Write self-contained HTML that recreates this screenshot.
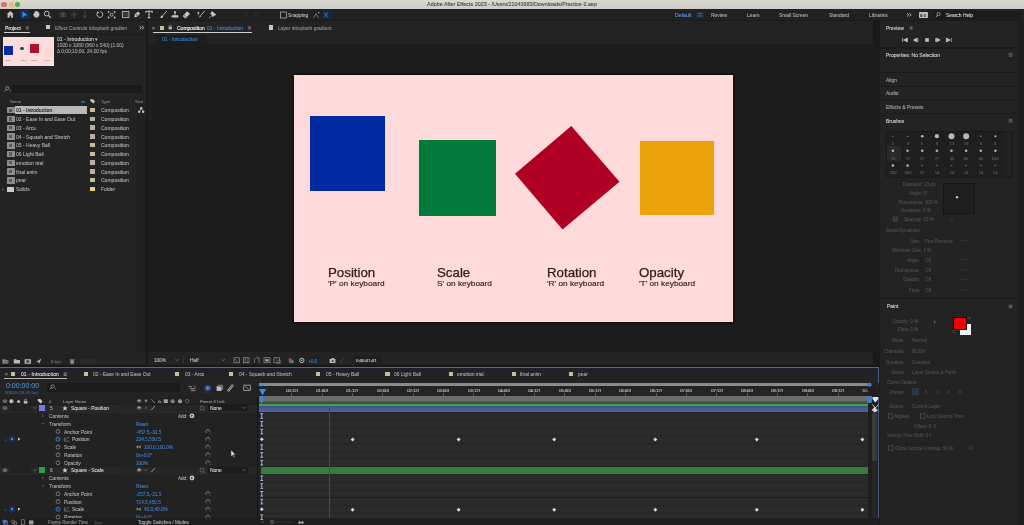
<!DOCTYPE html>
<html><head><meta charset="utf-8"><style>
html,body{margin:0;padding:0;width:1024px;height:525px;overflow:hidden;background:#1a1a1a;font-family:"Liberation Sans",sans-serif;}
body>div,#r>div{position:absolute;}
.t{position:absolute;white-space:nowrap;line-height:1;will-change:transform;-webkit-text-stroke:0.12px currentColor;}
svg{position:absolute;left:0;top:0;}
</style></head><body>
<div style="left:0px;top:0px;width:1024px;height:9px;background:linear-gradient(#dcdacb,#d3d1cb 50%,#cfcdca);"></div>
<div style="left:0px;top:9px;width:1024px;height:11px;background:#212121;"></div>
<div style="left:0px;top:20px;width:1024px;height:1px;background:#1b1b1b;"></div>
<div style="left:0px;top:21px;width:146px;height:344px;background:#232323;"></div>
<div style="left:148px;top:21px;width:725px;height:23px;background:#232323;"></div>
<div style="left:148px;top:44px;width:725px;height:308px;background:#1c1c1c;"></div>
<div style="left:148px;top:352px;width:725px;height:13px;background:#232323;"></div>
<div style="left:880px;top:21px;width:137px;height:504px;background:#232323;"></div>
<div style="left:1.4px;top:1.6px;width:5.2px;height:5.2px;border-radius:50%;background:#dc7262"></div>
<div style="left:8.700000000000001px;top:1.6px;width:5.2px;height:5.2px;border-radius:50%;background:#eab866"></div>
<div style="left:15.000000000000002px;top:1.6px;width:5.2px;height:5.2px;border-radius:50%;background:#55a855"></div>
<div class="t" style="left:511.5px;top:2px;font-size:5.4px;color:#4a4a48;transform:translateX(-50%);">Adobe After Effects 2023 - /Users/21043683/Downloads/Practice-2.aep</div>
<div style="left:20.2px;top:9.6px;width:8.5px;height:9.5px;background:#14305a;border-radius:1px"></div>
<div style="left:322.6px;top:10px;width:9.4px;height:9.6px;background:#14263e;border-radius:1px"></div>
<div class="t" style="left:288.3px;top:14px;font-size:4.75px;color:#b8b8b8;">Snapping</div>
<div class="t" style="left:674.8px;top:13px;font-size:5.2px;color:#5a92d8;">Default</div>
<div style="left:696px;top:12px;width:7.5px;height:6px;background:rgba(60,100,160,0.18);border-radius:1px"></div>
<div class="t" style="left:711px;top:14px;font-size:4.9px;color:#a8a8a8;">Review</div>
<div class="t" style="left:747px;top:14px;font-size:4.9px;color:#a8a8a8;">Learn</div>
<div class="t" style="left:779px;top:14px;font-size:4.9px;color:#a8a8a8;">Small Screen</div>
<div class="t" style="left:828.5px;top:14px;font-size:4.9px;color:#a8a8a8;">Standard</div>
<div class="t" style="left:868.7px;top:14px;font-size:4.9px;color:#a8a8a8;">Libraries</div>
<div style="left:918.7px;top:11.6px;width:9px;height:6.6px;background:#bdbdbd;border-radius:0.8px"></div>
<div class="t" style="left:919.6px;top:14px;font-size:4.2px;color:#303030;font-weight:bold">0:1</div>
<div style="left:933px;top:11px;width:88px;height:9px;background:#1b1b1b;"></div>
<div class="t" style="left:946px;top:14px;font-size:4.92px;color:#d0d0d0;-webkit-text-stroke:0.12px #d0d0d0">Search Help</div>
<div class="t" style="left:4.8px;top:27px;font-size:4.9px;color:#d6d6d6;font-weight:bold;letter-spacing:-0.1px">Project</div>
<div style="left:4px;top:32px;width:25.7px;height:1.1px;background:#d0d0d0;"></div>
<div style="left:45.8px;top:25.1px;width:4.7px;height:4.4px;background:#c4c2d6;"></div>
<div class="t" style="left:55px;top:27px;font-size:4.95px;color:#8c8c8c;">Effect Controls inksplash gradien</div>
<div style="left:0px;top:34px;width:146px;height:1px;background:#1c1c1c;"></div>
<div style="left:3px;top:37px;width:51px;height:29px;background:#fcdcdc;"></div>
<div style="left:4px;top:46px;width:9px;height:9px;background:#0a2aa0;"></div>
<div style="left:20.2px;top:47px;width:3.4px;height:3.4px;background:#1a5a32;border-radius:50%"></div>
<div style="left:30px;top:44px;width:9px;height:9px;background:#b0102a;"></div>
<div style="left:43.5px;top:46.5px;width:8px;height:8px;background:#f8d8c8;"></div>
<div style="left:5px;top:59.6px;width:6px;height:1px;background:rgba(120,90,90,0.3);"></div>
<div style="left:20.5px;top:59.6px;width:6px;height:1px;background:rgba(120,90,90,0.3);"></div>
<div style="left:31px;top:59.6px;width:6px;height:1px;background:rgba(120,90,90,0.3);"></div>
<div style="left:44px;top:59.6px;width:6px;height:1px;background:rgba(120,90,90,0.3);"></div>
<div class="t" style="left:57px;top:37px;font-size:5.1px;color:#c8c8c8;">01 - Introduction &#9662;</div>
<div class="t" style="left:57px;top:44px;font-size:4.85px;color:#a0a0a0;">1920 x 1080  (960 x 540) (1.00)</div>
<div class="t" style="left:57px;top:50px;font-size:4.85px;color:#a0a0a0;">&#916; 0;00;10;00, 24.00 fps</div>
<div style="left:12px;top:85px;width:130px;height:8.4px;background:#1a1a1a;border-radius:1px"></div>
<div class="t" style="left:10px;top:100px;font-size:4.2px;color:#7a7a7a;">Name</div>
<div class="t" style="left:100.5px;top:100px;font-size:4.2px;color:#7a7a7a;">Type</div>
<div class="t" style="left:135px;top:100px;font-size:4.2px;color:#7a7a7a;">Size</div>
<div style="left:130px;top:98px;width:0.6px;height:6px;background:#2e2e2e;"></div>
<div style="left:98px;top:98px;width:0.6px;height:6px;background:#2e2e2e;"></div>
<div style="left:15px;top:105.89999999999999px;width:72px;height:8.4px;background:#b8b8b8;"></div>
<div style="left:7px;top:107.1px;width:7.6px;height:6.4px;background:#8e8e8e;border-radius:0.6px"></div>
<div style="left:8.6px;top:108.5px;width:3.8px;height:3.4px;background:#5a5a5a;"></div>
<div style="left:90.2px;top:107.89999999999999px;width:4.4px;height:4.4px;background:#c8bc94;"></div>
<div class="t" style="left:100.5px;top:108px;font-size:5.02px;color:#a8a8a8;">Composition</div>
<div class="t" style="left:16px;top:108px;font-size:5.02px;color:#1e1e1e;">01 - Introduction</div>
<div style="left:7px;top:115.86px;width:7.6px;height:6.4px;background:#8e8e8e;border-radius:0.6px"></div>
<div style="left:8.6px;top:117.26px;width:3.8px;height:3.4px;background:#5a5a5a;"></div>
<div style="left:90.2px;top:116.66px;width:4.4px;height:4.4px;background:#b8b0a0;"></div>
<div class="t" style="left:100.5px;top:117px;font-size:5.02px;color:#a8a8a8;">Composition</div>
<div class="t" style="left:16px;top:117px;font-size:5.02px;color:#a8a8a8;">02 - Ease In and Ease Out</div>
<div style="left:7px;top:124.61999999999999px;width:7.6px;height:6.4px;background:#8e8e8e;border-radius:0.6px"></div>
<div style="left:8.6px;top:126.02px;width:3.8px;height:3.4px;background:#5a5a5a;"></div>
<div style="left:90.2px;top:125.41999999999999px;width:4.4px;height:4.4px;background:#b8b0a0;"></div>
<div class="t" style="left:100.5px;top:126px;font-size:5.02px;color:#a8a8a8;">Composition</div>
<div class="t" style="left:16px;top:126px;font-size:5.02px;color:#a8a8a8;">03 - Arcs</div>
<div style="left:7px;top:133.38px;width:7.6px;height:6.4px;background:#8e8e8e;border-radius:0.6px"></div>
<div style="left:8.6px;top:134.78px;width:3.8px;height:3.4px;background:#5a5a5a;"></div>
<div style="left:90.2px;top:134.18px;width:4.4px;height:4.4px;background:#b8b0a0;"></div>
<div class="t" style="left:100.5px;top:135px;font-size:5.02px;color:#a8a8a8;">Composition</div>
<div class="t" style="left:16px;top:135px;font-size:5.02px;color:#a8a8a8;">04 - Squash and Stretch</div>
<div style="left:7px;top:142.14px;width:7.6px;height:6.4px;background:#8e8e8e;border-radius:0.6px"></div>
<div style="left:8.6px;top:143.54px;width:3.8px;height:3.4px;background:#5a5a5a;"></div>
<div style="left:90.2px;top:142.94px;width:4.4px;height:4.4px;background:#c8bc94;"></div>
<div class="t" style="left:100.5px;top:143px;font-size:5.02px;color:#a8a8a8;">Composition</div>
<div class="t" style="left:16px;top:143px;font-size:5.02px;color:#a8a8a8;">05 - Heavy Ball</div>
<div style="left:7px;top:150.89999999999998px;width:7.6px;height:6.4px;background:#8e8e8e;border-radius:0.6px"></div>
<div style="left:8.6px;top:152.29999999999998px;width:3.8px;height:3.4px;background:#5a5a5a;"></div>
<div style="left:90.2px;top:151.7px;width:4.4px;height:4.4px;background:#c8bc94;"></div>
<div class="t" style="left:100.5px;top:152px;font-size:5.02px;color:#a8a8a8;">Composition</div>
<div class="t" style="left:16px;top:152px;font-size:5.02px;color:#a8a8a8;">06 Light Ball</div>
<div style="left:7px;top:159.66px;width:7.6px;height:6.4px;background:#8e8e8e;border-radius:0.6px"></div>
<div style="left:8.6px;top:161.06px;width:3.8px;height:3.4px;background:#5a5a5a;"></div>
<div style="left:90.2px;top:160.46px;width:4.4px;height:4.4px;background:#b8b0a0;"></div>
<div class="t" style="left:100.5px;top:161px;font-size:5.02px;color:#a8a8a8;">Composition</div>
<div class="t" style="left:16px;top:161px;font-size:5.02px;color:#a8a8a8;">emotion trial</div>
<div style="left:7px;top:168.42px;width:7.6px;height:6.4px;background:#8e8e8e;border-radius:0.6px"></div>
<div style="left:8.6px;top:169.82px;width:3.8px;height:3.4px;background:#5a5a5a;"></div>
<div style="left:90.2px;top:169.22px;width:4.4px;height:4.4px;background:#b8b0a0;"></div>
<div class="t" style="left:100.5px;top:170px;font-size:5.02px;color:#a8a8a8;">Composition</div>
<div class="t" style="left:16px;top:170px;font-size:5.02px;color:#a8a8a8;">final anim</div>
<div style="left:7px;top:177.18px;width:7.6px;height:6.4px;background:#8e8e8e;border-radius:0.6px"></div>
<div style="left:8.6px;top:178.58px;width:3.8px;height:3.4px;background:#5a5a5a;"></div>
<div style="left:90.2px;top:177.98000000000002px;width:4.4px;height:4.4px;background:#c8bc94;"></div>
<div class="t" style="left:100.5px;top:178px;font-size:5.02px;color:#a8a8a8;">Composition</div>
<div class="t" style="left:16px;top:178px;font-size:5.02px;color:#a8a8a8;">pear</div>
<div style="left:7.2px;top:186.54px;width:7px;height:5px;background:#c8c8c8;border-radius:0.5px"></div>
<div class="t" style="left:2.2px;top:188px;font-size:4.5px;color:#888;">&#8250;</div>
<div style="left:90.2px;top:186.74px;width:4.4px;height:4.4px;background:#e6d470;"></div>
<div class="t" style="left:100.5px;top:187px;font-size:5.0px;color:#a8a8a8;">Folder</div>
<div class="t" style="left:16px;top:187px;font-size:5.02px;color:#a8a8a8;">Solids</div>
<div style="left:137px;top:104px;width:9px;height:248px;background:#202020;"></div>
<div style="left:146px;top:21px;width:2px;height:344px;background:#181818;"></div>
<div style="left:148px;top:44px;width:3px;height:308px;background:#1f1f1f;"></div>
<div style="left:0px;top:352px;width:146px;height:13px;background:#232323;"></div>
<div class="t" style="left:51px;top:360px;font-size:4.3px;color:#707070;">8 bpc</div>
<div style="left:80px;top:359px;width:16px;height:5px;background:#2a2a2a;border-radius:1px"></div>
<div class="t" style="left:152.2px;top:26px;font-size:5px;color:#8a8a8a;">&#215;</div>
<div style="left:160px;top:25.6px;width:4.2px;height:4.2px;background:#c8bc94;"></div>
<div class="t" style="left:177px;top:26px;font-size:5.0px;color:#e0e0e0;-webkit-text-stroke:0.2px #e0e0e0">Composition</div>
<div class="t" style="left:207px;top:26px;font-size:5.0px;color:#3a86d8;">01 - Introduction</div>
<div style="left:152.8px;top:32px;width:99.2px;height:1.1px;background:#d0d0d0;"></div>
<div style="left:269px;top:25.4px;width:4.2px;height:4.4px;background:#c4c2d6;"></div>
<div class="t" style="left:277.8px;top:27px;font-size:4.95px;color:#8a8a8a;">Layer inksplash gradient</div>
<div style="left:155px;top:35px;width:52px;height:8.6px;background:#1d1d1d;"></div>
<div class="t" style="left:161.6px;top:38px;font-size:4.95px;color:#3a7cc8;">01 - Introduction</div>
<div class="t" style="left:157px;top:38px;font-size:4.5px;color:#444;">&#8249;</div>
<div style="left:148px;top:352px;width:725px;height:13px;background:#232323;"></div>
<div class="t" style="left:153.7px;top:359px;font-size:4.6px;color:#b8b8b8;">100%</div>
<div style="left:183px;top:356px;width:0.6px;height:8px;background:#333;"></div>
<div class="t" style="left:189.8px;top:359px;font-size:4.8px;color:#b8b8b8;">Half</div>
<div class="t" style="left:307.6px;top:360px;font-size:4.6px;color:#3a7cc8;">+0.0</div>
<div style="left:354px;top:356.2px;width:28px;height:8.4px;background:#1e1e1e;border-radius:1px"></div>
<div class="t" style="left:356px;top:359px;font-size:4.4px;color:#d0d0d0;">0;00;01;01</div>
<div style="left:879px;top:21px;width:1px;height:504px;background:#1a1a1a;"></div>
<div style="left:880px;top:21px;width:137px;height:26px;background:#232323;"></div>
<div style="left:880px;top:47px;width:137px;height:1.5px;background:#1a1a1a;"></div>
<div class="t" style="left:886.4px;top:26px;font-size:5.0px;color:#d0d0d0;">Preview</div>
<div style="left:880px;top:48.5px;width:137px;height:477px;background:#232323;"></div>
<div class="t" style="left:886.4px;top:53px;font-size:5.0px;color:#d0d0d0;">Properties: No Selection</div>
<div style="left:880px;top:71.9px;width:137px;height:1.2px;background:#1b1b1b;"></div>
<div style="left:880px;top:85.5px;width:137px;height:1.2px;background:#1b1b1b;"></div>
<div style="left:880px;top:99.1px;width:137px;height:1.2px;background:#1b1b1b;"></div>
<div style="left:880px;top:112.7px;width:137px;height:1.2px;background:#1b1b1b;"></div>
<div class="t" style="left:886.4px;top:79px;font-size:4.9px;color:#a0a0a0;">Align</div>
<div class="t" style="left:886.4px;top:92px;font-size:4.9px;color:#a0a0a0;">Audio</div>
<div class="t" style="left:886.4px;top:106px;font-size:4.9px;color:#a0a0a0;">Effects &amp; Presets</div>
<div class="t" style="left:886.4px;top:119px;font-size:5.0px;color:#d0d0d0;">Brushes</div>
<div style="left:1017px;top:21px;width:7px;height:504px;background:#1e1e1e;"></div>
<div style="left:886.4px;top:131.4px;width:124.6px;height:45px;background:#1f1f1f;border:0.5px solid #1a1a1a"></div>
<div style="left:1004px;top:132px;width:6.6px;height:44px;background:#222222;"></div>
<div style="left:886.6px;top:145.6px;width:14.6px;height:15px;background:#2a2a2a;"></div>
<div class="t" style="left:892.9px;top:142px;font-size:4.2px;color:#5a5a5a;transform:translateX(-50%);">1</div>
<div class="t" style="left:892.9px;top:157px;font-size:4.2px;color:#5a5a5a;transform:translateX(-50%);">13</div>
<div class="t" style="left:892.9px;top:171px;font-size:4.2px;color:#5a5a5a;transform:translateX(-50%);">200</div>
<div class="t" style="left:907.55px;top:142px;font-size:4.2px;color:#5a5a5a;transform:translateX(-50%);">3</div>
<div class="t" style="left:907.55px;top:157px;font-size:4.2px;color:#5a5a5a;transform:translateX(-50%);">17</div>
<div class="t" style="left:907.55px;top:171px;font-size:4.2px;color:#5a5a5a;transform:translateX(-50%);">300</div>
<div class="t" style="left:922.1999999999999px;top:142px;font-size:4.2px;color:#5a5a5a;transform:translateX(-50%);">5</div>
<div class="t" style="left:922.1999999999999px;top:157px;font-size:4.2px;color:#5a5a5a;transform:translateX(-50%);">21</div>
<div class="t" style="left:922.1999999999999px;top:171px;font-size:4.2px;color:#5a5a5a;transform:translateX(-50%);">11</div>
<div class="t" style="left:936.85px;top:142px;font-size:4.2px;color:#5a5a5a;transform:translateX(-50%);">9</div>
<div class="t" style="left:936.85px;top:157px;font-size:4.2px;color:#5a5a5a;transform:translateX(-50%);">27</div>
<div class="t" style="left:936.85px;top:171px;font-size:4.2px;color:#5a5a5a;transform:translateX(-50%);">14</div>
<div class="t" style="left:951.5px;top:142px;font-size:4.2px;color:#5a5a5a;transform:translateX(-50%);">13</div>
<div class="t" style="left:951.5px;top:157px;font-size:4.2px;color:#5a5a5a;transform:translateX(-50%);">35</div>
<div class="t" style="left:951.5px;top:171px;font-size:4.2px;color:#5a5a5a;transform:translateX(-50%);">14</div>
<div class="t" style="left:966.15px;top:142px;font-size:4.2px;color:#5a5a5a;transform:translateX(-50%);">19</div>
<div class="t" style="left:966.15px;top:157px;font-size:4.2px;color:#5a5a5a;transform:translateX(-50%);">45</div>
<div class="t" style="left:966.15px;top:171px;font-size:4.2px;color:#5a5a5a;transform:translateX(-50%);">14</div>
<div class="t" style="left:980.8px;top:142px;font-size:4.2px;color:#5a5a5a;transform:translateX(-50%);">5</div>
<div class="t" style="left:980.8px;top:157px;font-size:4.2px;color:#5a5a5a;transform:translateX(-50%);">65</div>
<div class="t" style="left:980.8px;top:171px;font-size:4.2px;color:#5a5a5a;transform:translateX(-50%);">14</div>
<div class="t" style="left:995.4499999999999px;top:142px;font-size:4.2px;color:#5a5a5a;transform:translateX(-50%);">9</div>
<div class="t" style="left:995.4499999999999px;top:157px;font-size:4.2px;color:#5a5a5a;transform:translateX(-50%);">100</div>
<div class="t" style="left:995.4499999999999px;top:171px;font-size:4.2px;color:#5a5a5a;transform:translateX(-50%);">14</div>
<div class="t" style="right:88.5px;top:183px;font-size:4.6px;color:#4c4c4c;">Diameter: 23 px</div>
<div class="t" style="right:96.5px;top:192px;font-size:4.6px;color:#4c4c4c;">Angle: 0&#176;</div>
<div class="t" style="right:86.5px;top:201px;font-size:4.6px;color:#4c4c4c;">Roundness: 100 %</div>
<div class="t" style="right:92.5px;top:209px;font-size:4.6px;color:#4c4c4c;">Hardness: 0 %</div>
<div class="t" style="right:90.5px;top:218px;font-size:4.6px;color:#4c4c4c;">Spacing: 25 %</div>
<div style="left:942.7px;top:183.2px;width:30px;height:29px;background:#1e1e1e;border:0.6px solid #141414"></div>
<div class="t" style="left:950px;top:219px;font-size:4.5px;color:#444;">&#9633;</div>
<div class="t" style="left:886.4px;top:229px;font-size:4.6px;color:#4c4c4c;">Brush Dynamics</div>
<div class="t" style="right:104px;top:240px;font-size:4.6px;color:#4c4c4c;">Size:</div>
<div class="t" style="left:925px;top:240px;font-size:4.6px;color:#4c4c4c;">Pen Pressure</div>
<div class="t" style="right:92.5px;top:249px;font-size:4.6px;color:#4c4c4c;">Minimum Size: 1 %</div>
<div class="t" style="right:104px;top:259px;font-size:4.6px;color:#4c4c4c;">Angle:</div>
<div class="t" style="left:925px;top:259px;font-size:4.6px;color:#4c4c4c;">Off</div>
<div class="t" style="right:104px;top:269px;font-size:4.6px;color:#4c4c4c;">Roundness:</div>
<div class="t" style="left:925px;top:269px;font-size:4.6px;color:#4c4c4c;">Off</div>
<div class="t" style="right:104px;top:278px;font-size:4.6px;color:#4c4c4c;">Opacity:</div>
<div class="t" style="left:925px;top:278px;font-size:4.6px;color:#4c4c4c;">Off</div>
<div class="t" style="right:104px;top:289px;font-size:4.6px;color:#4c4c4c;">Flow:</div>
<div class="t" style="left:925px;top:289px;font-size:4.6px;color:#4c4c4c;">Off</div>
<div style="left:880px;top:297.6px;width:137px;height:1.4px;background:#1b1b1b;"></div>
<div class="t" style="left:886.8px;top:304px;font-size:5.0px;color:#d0d0d0;">Paint</div>
<div class="t" style="right:105.5px;top:320px;font-size:4.6px;color:#4c4c4c;">Opacity: 0 %</div>
<div class="t" style="right:105.5px;top:328px;font-size:4.6px;color:#4c4c4c;">Flow: 0 %</div>
<div style="left:959.6px;top:324px;width:11.4px;height:10.7px;background:#f4f4f4;"></div>
<div style="left:953px;top:317px;width:12px;height:10.7px;background:#f00000;border:0.4px solid #300"></div>
<div class="t" style="right:119px;top:339px;font-size:4.6px;color:#4c4c4c;">Mode:</div>
<div class="t" style="left:912px;top:339px;font-size:4.6px;color:#4c4c4c;">Normal</div>
<div class="t" style="right:119px;top:350px;font-size:4.6px;color:#4c4c4c;">Channels:</div>
<div class="t" style="left:912px;top:350px;font-size:4.6px;color:#4c4c4c;">RGBA</div>
<div class="t" style="right:119px;top:361px;font-size:4.6px;color:#4c4c4c;">Duration:</div>
<div class="t" style="left:912px;top:361px;font-size:4.6px;color:#4c4c4c;">Constant</div>
<div class="t" style="right:119px;top:371px;font-size:4.6px;color:#4c4c4c;">Erase:</div>
<div class="t" style="left:912px;top:371px;font-size:4.6px;color:#4c4c4c;">Layer Source &amp; Paint</div>
<div class="t" style="left:886.8px;top:381px;font-size:4.6px;color:#4c4c4c;">Clone Options</div>
<div class="t" style="right:119px;top:391px;font-size:4.6px;color:#4c4c4c;">Preset:</div>
<div style="left:912.4px;top:388.4px;width:6.4px;height:7px;background:#2a3648;"></div>
<div class="t" style="right:119px;top:405px;font-size:4.6px;color:#4c4c4c;">Source:</div>
<div class="t" style="left:912px;top:405px;font-size:4.6px;color:#4c4c4c;">Current Layer</div>
<div class="t" style="left:894.4px;top:415px;font-size:4.6px;color:#4c4c4c;">Aligned</div>
<div class="t" style="left:926.8px;top:415px;font-size:4.6px;color:#4c4c4c;">Lock Source Time</div>
<div class="t" style="left:914px;top:425px;font-size:4.6px;color:#4c4c4c;">Offset: 0, 0</div>
<div class="t" style="left:886.8px;top:434px;font-size:4.6px;color:#4c4c4c;">Source Time Shift: 0 f</div>
<div class="t" style="left:894.6px;top:447px;font-size:4.6px;color:#4c4c4c;">Clone Source Overlay:  50 %</div>
<div style="left:0px;top:365px;width:880px;height:2px;background:#15171b;"></div>
<div style="left:0px;top:367px;width:879px;height:158px;background:#232323;"></div>
<div style="left:0px;top:368px;width:879px;height:8px;background:linear-gradient(#1d212a,#232323);"></div>
<div style="left:0px;top:367px;width:879px;height:1px;background:#56688a;"></div>
<div style="left:878px;top:367px;width:1px;height:158px;background:#4a5c80;"></div>
<div class="t" style="left:4.5px;top:373px;font-size:4.6px;color:#8a8a8a;">&#215;</div>
<div style="left:11px;top:372px;width:4.2px;height:4.4px;background:#c8bc94;"></div>
<div class="t" style="left:21px;top:373px;font-size:4.9px;color:#d8d8d8;-webkit-text-stroke:0.15px #d8d8d8;letter-spacing:0.15px">01 - Introduction</div>
<div style="left:4.4px;top:378.2px;width:63px;height:1.1px;background:#b4b4b4;"></div>
<div style="left:84px;top:372px;width:4.2px;height:4.4px;background:#c8bc94;"></div>
<div class="t" style="left:93px;top:373px;font-size:4.9px;color:#a4a4a4;">02 - Ease In and Ease Out</div>
<div style="left:175px;top:372px;width:4.2px;height:4.4px;background:#c8bc94;"></div>
<div class="t" style="left:185px;top:373px;font-size:4.9px;color:#a4a4a4;">03 - Arcs</div>
<div style="left:229px;top:372px;width:4.2px;height:4.4px;background:#c8bc94;"></div>
<div class="t" style="left:239px;top:373px;font-size:4.9px;color:#a4a4a4;">04 - Squash and Stretch</div>
<div style="left:316px;top:372px;width:4.2px;height:4.4px;background:#c8bc94;"></div>
<div class="t" style="left:326px;top:373px;font-size:4.9px;color:#a4a4a4;">05 - Heavy Ball</div>
<div style="left:385.4px;top:372px;width:4.2px;height:4.4px;background:#c8bc94;"></div>
<div class="t" style="left:394px;top:373px;font-size:4.9px;color:#a4a4a4;">06 Light Ball</div>
<div style="left:448.6px;top:372px;width:4.2px;height:4.4px;background:#c8bc94;"></div>
<div class="t" style="left:457px;top:373px;font-size:4.9px;color:#a4a4a4;">emotion trial</div>
<div style="left:512px;top:372px;width:4.2px;height:4.4px;background:#c8bc94;"></div>
<div class="t" style="left:520px;top:373px;font-size:4.9px;color:#a4a4a4;">final anim</div>
<div style="left:568.6px;top:372px;width:4.2px;height:4.4px;background:#c8bc94;"></div>
<div class="t" style="left:578px;top:373px;font-size:4.9px;color:#a4a4a4;">pear</div>
<div class="t" style="left:5.6px;top:383px;font-size:6.5px;color:#5c9ce4;transform-origin:0 50%;transform:scaleX(1.08);-webkit-text-stroke:0">0:00:00:00</div>
<div class="t" style="left:5.2px;top:392px;font-size:3.6px;color:#35608a;transform-origin:0 50%;transform:scaleX(1.2)">00000 (24.00 fps)</div>
<div style="left:47px;top:383px;width:133px;height:8.8px;background:#1a1a1a;border-radius:1px"></div>
<div style="left:203.4px;top:392.4px;width:8.6px;height:0.7px;background:#4a2020;"></div>
<div style="left:0px;top:396.6px;width:258px;height:121.4px;background:#222222;"></div>
<div class="t" style="left:48.6px;top:400px;font-size:4.0px;color:#7a7a7a;">#</div>
<div class="t" style="left:63px;top:400px;font-size:4.3px;color:#888888;">Layer Name</div>
<div class="t" style="left:157.6px;top:400px;font-size:4.4px;color:#a0a0a0;font-style:italic">fx</div>
<div class="t" style="left:200.4px;top:400px;font-size:4.1px;color:#909090;">Parent &amp; Link</div>
<div style="left:0px;top:404px;width:258px;height:0.8px;background:#1c1c1c;"></div>
<div style="left:0px;top:404.6px;width:257px;height:8px;background:#282828;"></div>
<div style="left:10px;top:405px;width:21px;height:6px;background:#222222;"></div>
<div style="left:39px;top:405.2px;width:5.6px;height:5.6px;background:#6e7ce0;"></div>
<div class="t" style="left:49.6px;top:407px;font-size:4.8px;color:#a8a8a8;">5</div>
<div class="t" style="left:71px;top:407px;font-size:4.95px;color:#d0d0d0;">Square - Position</div>
<div style="left:118px;top:404.4px;width:18px;height:7.2px;background:#262626;"></div>
<div style="left:157px;top:404.6px;width:42px;height:6.8px;background:#262626;"></div>
<div style="left:207.6px;top:404.6px;width:40px;height:6.8px;background:#1c1c1c;"></div>
<div class="t" style="left:210px;top:407px;font-size:4.9px;color:#d0d0d0;">None</div>
<div class="t" style="left:49px;top:415px;font-size:4.9px;color:#a8a8a8;">Contents</div>
<div class="t" style="left:178px;top:415px;font-size:4.6px;color:#a8a8a8;">Add:</div>
<div class="t" style="left:49px;top:423px;font-size:4.9px;color:#a8a8a8;">Transform</div>
<div class="t" style="left:136px;top:423px;font-size:4.7px;color:#3a7cc8;">Reset</div>
<div class="t" style="left:64px;top:431px;font-size:4.9px;color:#a8a8a8;">Anchor Point</div>
<div class="t" style="left:136px;top:431px;font-size:4.7px;color:#3a7cc8;">-457.5,-31.5</div>
<div class="t" style="left:3.6px;top:439px;font-size:3.4px;color:#444;">&#9664;</div>
<div class="t" style="left:72px;top:438px;font-size:4.9px;color:#a8a8a8;">Position</div>
<div class="t" style="left:136px;top:438px;font-size:4.7px;color:#3a7cc8;">234.5,530.5</div>
<div class="t" style="left:64px;top:446px;font-size:4.9px;color:#a8a8a8;">Scale</div>
<div class="t" style="left:144px;top:446px;font-size:4.7px;color:#3a7cc8;">100.0,100.0%</div>
<div class="t" style="left:64px;top:454px;font-size:4.9px;color:#a8a8a8;">Rotation</div>
<div class="t" style="left:136px;top:454px;font-size:4.7px;color:#3a7cc8;">0x+0.0&#176;</div>
<div class="t" style="left:64px;top:462px;font-size:4.9px;color:#a8a8a8;">Opacity</div>
<div class="t" style="left:136px;top:462px;font-size:4.7px;color:#3a7cc8;">100%</div>
<div style="left:0px;top:466.8px;width:257px;height:8px;background:#282828;"></div>
<div style="left:10px;top:467.2px;width:21px;height:6px;background:#222222;"></div>
<div style="left:39px;top:467.4px;width:5.6px;height:5.6px;background:#30a040;"></div>
<div class="t" style="left:49.6px;top:469px;font-size:4.8px;color:#a8a8a8;">6</div>
<div class="t" style="left:71px;top:469px;font-size:4.95px;color:#d0d0d0;">Square - Scale</div>
<div style="left:118px;top:466.59999999999997px;width:18px;height:7.2px;background:#262626;"></div>
<div style="left:157px;top:466.8px;width:42px;height:6.8px;background:#262626;"></div>
<div style="left:207.6px;top:466.8px;width:40px;height:6.8px;background:#1c1c1c;"></div>
<div class="t" style="left:210px;top:469px;font-size:4.9px;color:#d0d0d0;">None</div>
<div class="t" style="left:49px;top:477px;font-size:4.9px;color:#a8a8a8;">Contents</div>
<div class="t" style="left:178px;top:477px;font-size:4.6px;color:#a8a8a8;">Add:</div>
<div class="t" style="left:49px;top:485px;font-size:4.9px;color:#a8a8a8;">Transform</div>
<div class="t" style="left:136px;top:485px;font-size:4.7px;color:#3a7cc8;">Reset</div>
<div class="t" style="left:64px;top:493px;font-size:4.9px;color:#a8a8a8;">Anchor Point</div>
<div class="t" style="left:136px;top:493px;font-size:4.7px;color:#3a7cc8;">-257.5,-21.5</div>
<div class="t" style="left:64px;top:501px;font-size:4.9px;color:#a8a8a8;">Position</div>
<div class="t" style="left:136px;top:501px;font-size:4.7px;color:#3a7cc8;">714.5,450.5</div>
<div class="t" style="left:3.6px;top:509px;font-size:3.4px;color:#444;">&#9664;</div>
<div class="t" style="left:72px;top:508px;font-size:4.9px;color:#a8a8a8;">Scale</div>
<div class="t" style="left:144px;top:508px;font-size:4.7px;color:#3a7cc8;">40.0,40.0%</div>
<div class="t" style="left:64px;top:516px;font-size:4.9px;color:#a8a8a8;">Rotation</div>
<div class="t" style="left:136px;top:516px;font-size:4.7px;color:#3a7cc8;">0x+0.0&#176;</div>
<div style="left:0px;top:518px;width:879px;height:7px;background:#1e1e1e;"></div>
<div class="t" style="left:48px;top:521px;font-size:4.5px;color:#8a8a8a;">Frame Render Time</div>
<div class="t" style="left:94px;top:521px;font-size:4.1px;color:#5a5a5a;">1ms</div>
<div class="t" style="left:138px;top:521px;font-size:4.6px;color:#a8a8a8;">Toggle Switches / Modes</div>
<div style="left:258.6px;top:383.2px;width:620px;height:13.4px;background:#232323;"></div>
<div style="left:258.6px;top:383.2px;width:609px;height:3px;background:#8a8a8a;border-radius:1px"></div>
<div class="t" style="left:291.6px;top:389px;font-size:4.2px;color:#c4c4c4;transform:translateX(-50%);">00:12f</div>
<div style="left:291.3px;top:393.4px;width:0.7px;height:2.4px;background:#5c5c5c;"></div>
<div class="t" style="left:321.95000000000005px;top:389px;font-size:4.2px;color:#c4c4c4;transform:translateX(-50%);">01:00f</div>
<div style="left:321.65000000000003px;top:393.4px;width:0.7px;height:2.4px;background:#5c5c5c;"></div>
<div class="t" style="left:352.3px;top:389px;font-size:4.2px;color:#c4c4c4;transform:translateX(-50%);">01:12f</div>
<div style="left:352.0px;top:393.4px;width:0.7px;height:2.4px;background:#5c5c5c;"></div>
<div class="t" style="left:382.65000000000003px;top:389px;font-size:4.2px;color:#c4c4c4;transform:translateX(-50%);">02:00f</div>
<div style="left:382.35px;top:393.4px;width:0.7px;height:2.4px;background:#5c5c5c;"></div>
<div class="t" style="left:413.0px;top:389px;font-size:4.2px;color:#c4c4c4;transform:translateX(-50%);">02:12f</div>
<div style="left:412.7px;top:393.4px;width:0.7px;height:2.4px;background:#5c5c5c;"></div>
<div class="t" style="left:443.35px;top:389px;font-size:4.2px;color:#c4c4c4;transform:translateX(-50%);">03:00f</div>
<div style="left:443.05px;top:393.4px;width:0.7px;height:2.4px;background:#5c5c5c;"></div>
<div class="t" style="left:473.70000000000005px;top:389px;font-size:4.2px;color:#c4c4c4;transform:translateX(-50%);">03:12f</div>
<div style="left:473.40000000000003px;top:393.4px;width:0.7px;height:2.4px;background:#5c5c5c;"></div>
<div class="t" style="left:504.05000000000007px;top:389px;font-size:4.2px;color:#c4c4c4;transform:translateX(-50%);">04:00f</div>
<div style="left:503.75000000000006px;top:393.4px;width:0.7px;height:2.4px;background:#5c5c5c;"></div>
<div class="t" style="left:534.4000000000001px;top:389px;font-size:4.2px;color:#c4c4c4;transform:translateX(-50%);">04:12f</div>
<div style="left:534.1000000000001px;top:393.4px;width:0.7px;height:2.4px;background:#5c5c5c;"></div>
<div class="t" style="left:564.75px;top:389px;font-size:4.2px;color:#c4c4c4;transform:translateX(-50%);">05:00f</div>
<div style="left:564.45px;top:393.4px;width:0.7px;height:2.4px;background:#5c5c5c;"></div>
<div class="t" style="left:595.1px;top:389px;font-size:4.2px;color:#c4c4c4;transform:translateX(-50%);">05:12f</div>
<div style="left:594.8000000000001px;top:393.4px;width:0.7px;height:2.4px;background:#5c5c5c;"></div>
<div class="t" style="left:625.45px;top:389px;font-size:4.2px;color:#c4c4c4;transform:translateX(-50%);">06:00f</div>
<div style="left:625.1500000000001px;top:393.4px;width:0.7px;height:2.4px;background:#5c5c5c;"></div>
<div class="t" style="left:655.8000000000001px;top:389px;font-size:4.2px;color:#c4c4c4;transform:translateX(-50%);">06:12f</div>
<div style="left:655.5000000000001px;top:393.4px;width:0.7px;height:2.4px;background:#5c5c5c;"></div>
<div class="t" style="left:686.1500000000001px;top:389px;font-size:4.2px;color:#c4c4c4;transform:translateX(-50%);">07:00f</div>
<div style="left:685.8500000000001px;top:393.4px;width:0.7px;height:2.4px;background:#5c5c5c;"></div>
<div class="t" style="left:716.5px;top:389px;font-size:4.2px;color:#c4c4c4;transform:translateX(-50%);">07:12f</div>
<div style="left:716.2px;top:393.4px;width:0.7px;height:2.4px;background:#5c5c5c;"></div>
<div class="t" style="left:746.85px;top:389px;font-size:4.2px;color:#c4c4c4;transform:translateX(-50%);">08:00f</div>
<div style="left:746.5500000000001px;top:393.4px;width:0.7px;height:2.4px;background:#5c5c5c;"></div>
<div class="t" style="left:777.2px;top:389px;font-size:4.2px;color:#c4c4c4;transform:translateX(-50%);">08:12f</div>
<div style="left:776.9000000000001px;top:393.4px;width:0.7px;height:2.4px;background:#5c5c5c;"></div>
<div class="t" style="left:807.5500000000001px;top:389px;font-size:4.2px;color:#c4c4c4;transform:translateX(-50%);">09:00f</div>
<div style="left:807.2500000000001px;top:393.4px;width:0.7px;height:2.4px;background:#5c5c5c;"></div>
<div class="t" style="left:837.9000000000001px;top:389px;font-size:4.2px;color:#c4c4c4;transform:translateX(-50%);">09:12f</div>
<div style="left:837.6000000000001px;top:393.4px;width:0.7px;height:2.4px;background:#5c5c5c;"></div>
<div class="t" style="left:866px;top:389px;font-size:4.2px;color:#b0b0b0;transform:translateX(-50%);">10:0</div>
<div style="left:258.6px;top:396px;width:609px;height:5.4px;background:#6c6c6c;"></div>
<div style="left:258.6px;top:401.4px;width:609.4px;height:2.3px;background:linear-gradient(#555855,#3a4a3c);"></div>
<div style="left:258.6px;top:403.7px;width:609.4px;height:2.2px;background:#3aa447;"></div>
<div style="left:258.6px;top:405.9px;width:609.4px;height:6.5px;background:linear-gradient(#46528a,#5462a4);"></div>
<div style="left:258.6px;top:412.4px;width:609.4px;height:105.6px;background:#2b2b2b;"></div>
<div style="left:258.6px;top:411.8px;width:609.4px;height:0.7px;background:#242424;"></div>
<div style="left:258.6px;top:419.58px;width:609.4px;height:0.7px;background:#242424;"></div>
<div style="left:258.6px;top:427.36px;width:609.4px;height:0.7px;background:#242424;"></div>
<div style="left:258.6px;top:435.14px;width:609.4px;height:0.7px;background:#242424;"></div>
<div style="left:258.6px;top:442.92px;width:609.4px;height:0.7px;background:#242424;"></div>
<div style="left:258.6px;top:450.7px;width:609.4px;height:0.7px;background:#242424;"></div>
<div style="left:258.6px;top:458.48px;width:609.4px;height:0.7px;background:#242424;"></div>
<div style="left:258.6px;top:466.26px;width:609.4px;height:0.7px;background:#242424;"></div>
<div style="left:258.6px;top:474.04px;width:609.4px;height:0.7px;background:#242424;"></div>
<div style="left:258.6px;top:481.82px;width:609.4px;height:0.7px;background:#242424;"></div>
<div style="left:258.6px;top:489.6px;width:609.4px;height:0.7px;background:#242424;"></div>
<div style="left:258.6px;top:497.38px;width:609.4px;height:0.7px;background:#242424;"></div>
<div style="left:258.6px;top:505.16px;width:609.4px;height:0.7px;background:#242424;"></div>
<div style="left:258.6px;top:512.9399999999999px;width:609.4px;height:0.7px;background:#242424;"></div>
<div style="left:258.6px;top:466.8px;width:609.4px;height:6.8px;background:#3c7a3c;"></div>
<div style="left:258.6px;top:473.6px;width:609.4px;height:1.2px;background:#1f2a1f;"></div>
<div style="left:258.6px;top:497px;width:609.4px;height:0.8px;background:#1b1b1b;"></div>
<div style="left:329px;top:406px;width:1px;height:112px;background:#743a3a;"></div>
<div style="left:261.3px;top:402px;width:0.9px;height:3px;background:#4a7ed0;"></div>
<div style="left:258.6px;top:412px;width:5.8px;height:106px;background:#1b2433;"></div>
<div style="left:261px;top:466.8px;width:5px;height:6.8px;background:#3c7a3c;"></div>
<div style="left:257px;top:396px;width:1.4px;height:122px;background:#141414;"></div>
<div style="left:868px;top:386.4px;width:10px;height:131.6px;background:#1f1f1f;"></div>
<div style="left:872px;top:412px;width:5px;height:106px;background:#262626;"></div>
<div style="left:872.4px;top:413px;width:4.2px;height:47.6px;background:#3a3a3a;border-radius:1px"></div>
<div style="left:867.2px;top:396.2px;width:4.4px;height:6.8px;background:#3a7ed0;border-radius:1px"></div>
<div style="left:292px;top:73px;width:443px;height:251px;background:#171212;"></div>
<div style="left:294px;top:75px;width:439px;height:247px;background:#fedada;"></div>
<div style="left:310px;top:116px;width:75px;height:75px;background:#0029a3;"></div>
<div style="left:419px;top:140px;width:77px;height:76px;background:#027a3a;"></div>
<div style="left:640px;top:141px;width:74px;height:74px;background:#eaa30a;"></div>
<svg width="1024" height="525" style="position:absolute;left:0;top:0"><polygon points="571.3,126 619.5,181.8 562.5,229.5 515,173.7" fill="#b00024"/></svg>
<div class="t" style="left:328px;top:267px;font-size:12.2px;color:#2a1d1e;transform-origin:0 50%;transform:scaleX(1.09);-webkit-text-stroke:0.25px #2a1d1e">Position</div>
<div class="t" style="left:328px;top:280px;font-size:7.6px;color:#2a1d1e;transform-origin:0 50%;transform:scaleX(1.09);-webkit-text-stroke:0.15px #2a1d1e">'P' on keyboard</div>
<div class="t" style="left:437px;top:267px;font-size:12.2px;color:#2a1d1e;transform-origin:0 50%;transform:scaleX(1.09);-webkit-text-stroke:0.25px #2a1d1e">Scale</div>
<div class="t" style="left:437px;top:280px;font-size:7.6px;color:#2a1d1e;transform-origin:0 50%;transform:scaleX(1.09);-webkit-text-stroke:0.15px #2a1d1e">S' on keyboard</div>
<div class="t" style="left:546.5px;top:267px;font-size:12.2px;color:#2a1d1e;transform-origin:0 50%;transform:scaleX(1.09);-webkit-text-stroke:0.25px #2a1d1e">Rotation</div>
<div class="t" style="left:546.5px;top:280px;font-size:7.6px;color:#2a1d1e;transform-origin:0 50%;transform:scaleX(1.09);-webkit-text-stroke:0.15px #2a1d1e">'R' on keyboard</div>
<div class="t" style="left:638.5px;top:267px;font-size:12.2px;color:#2a1d1e;transform-origin:0 50%;transform:scaleX(1.09);-webkit-text-stroke:0.25px #2a1d1e">Opacity</div>
<div class="t" style="left:638.5px;top:280px;font-size:7.6px;color:#2a1d1e;transform-origin:0 50%;transform:scaleX(1.09);-webkit-text-stroke:0.15px #2a1d1e">'T' on keyboard</div>
<svg width="1024" height="525" style="position:absolute;left:0;top:0"><path d="M6.7 14.3 L10.25 10.9 L13.8 14.3 L12.9 14.3 L12.9 17.7 L11.0 17.7 L11.0 15.6 L9.5 15.6 L9.5 17.7 L7.6 17.7 L7.6 14.3 Z" fill="#c4c4c4"/><path d="M22.4 11.4 L27.6 15.2 L24.6 15.6 L22.8 17.8 Z" fill="#4d8fe0"/><path d="M33 14.5 L34.2 13.6 L34.6 11.6 L35.6 11.6 L35.8 11 L36.8 11 L37.1 11.5 L38 11.6 L38.3 12.6 L39.3 12.8 L39.3 15.5 L37.8 17.6 L35 17.6 Z" fill="#c4c4c4"/><circle cx="46.7" cy="13.6" r="2.4" fill="none" stroke="#c4c4c4" stroke-width="1"/><path d="M48.4 15.4 L50.8 17.8" stroke="#c4c4c4" stroke-width="1.2"/><ellipse cx="63" cy="14.8" rx="3.2" ry="2" fill="none" stroke="#4e4e4e" stroke-width="1"/><circle cx="63" cy="14.4" r="1.6" fill="#4e4e4e"/><path d="M74 11.5 V18 M70.8 14.8 H77.2" stroke="#4e4e4e" stroke-width="0.9"/><path d="M85 11 V17.5 M83 15.5 L85 17.8 L87 15.5" stroke="#4e4e4e" stroke-width="0.9" fill="none"/><path d="M97.6 12.6 A2.9 2.9 0 1 0 100.2 11.6" fill="none" stroke="#c4c4c4" stroke-width="0.9"/><path d="M96.6 11.2 L97.4 13.6 L99.6 12.6 Z" fill="#c4c4c4"/><circle cx="111.6" cy="14.7" r="1.5" fill="none" stroke="#c4c4c4" stroke-width="0.8"/><circle cx="108.6" cy="11.9" r="0.9" fill="#c4c4c4"/><circle cx="114.6" cy="11.9" r="0.9" fill="#c4c4c4"/><circle cx="108.6" cy="17.5" r="0.9" fill="#c4c4c4"/><circle cx="114.6" cy="17.5" r="0.9" fill="#c4c4c4"/><rect x="122.5" y="11.5" width="6.4" height="6" fill="none" stroke="#c4c4c4" stroke-width="0.8"/><rect x="123.4" y="12.4" width="4.6" height="4.2" fill="#3a3a3a"/><path d="M134.4 17.4 L135 14.2 L138 11.4 L140.2 13.4 L137.4 16.6 Z" fill="#c4c4c4"/><circle cx="136.9" cy="14.9" r="0.7" fill="#212121"/><circle cx="140.6" cy="17.6" r="0.5" fill="#777"/><path d="M145.8 11.3 H152.2 V12.8 M145.8 11.3 V12.8 M149 11.3 V17.8 M147.6 17.8 H150.4" stroke="#c4c4c4" stroke-width="1.1" fill="none"/><path d="M167 11 L162.4 16" stroke="#c4c4c4" stroke-width="0.9"/><path d="M160.2 18 L161.3 15.5 L163.3 16.3 L162.2 18 Z" fill="#c4c4c4"/><circle cx="175" cy="12.2" r="1.1" fill="#c4c4c4"/><rect x="174.5" y="12.8" width="1" height="2.4" fill="#c4c4c4"/><rect x="171.6" y="15.2" width="6.8" height="2.4" rx="0.8" fill="#c4c4c4"/><path d="M182.6 16.2 L187 11.2 L190 13.7 L185.6 18.6 Z" fill="#c4c4c4"/><path d="M183.8 14.8 L186.8 17.3" stroke="#212121" stroke-width="0.5"/><path d="M198.3 11.6 V15 M197.3 12.8 H199.4" stroke="#c4c4c4" stroke-width="0.8"/><path d="M204.6 11 L200.4 15.8" stroke="#c4c4c4" stroke-width="0.9"/><path d="M199 17.8 L199.9 15.5 L201.4 16.2 Z" fill="#c4c4c4"/><path d="M212 11 L216.3 14.8 L214.8 15.4 L212.6 17 L211.4 14.6 L210.2 13.8 Z" fill="#c4c4c4"/><path d="M211.6 15.6 L209.2 18.2" stroke="#c4c4c4" stroke-width="0.7"/><rect x="280.5" y="12" width="6" height="6" fill="none" stroke="#a8a8a8" stroke-width="0.8"/><path d="M313.6 17.8 L316 13.6 L318.4 17.8" fill="none" stroke="#8a8a8a" stroke-width="0.8"/><circle cx="318.8" cy="12.6" r="0.7" fill="#d0d0d0"/><path d="M243 17.6 L246 12.6 L249 17.6" fill="none" stroke="#303030" stroke-width="0.8"/><path d="M256 12 V17.6 M253.4 14.8 H258.6" stroke="#2e2e2e" stroke-width="0.8"/><path d="M323.8 12 L328.2 17.8 M328.2 12 L323.8 17.8" stroke="#3a6aa0" stroke-width="0.8"/><circle cx="326" cy="14.9" r="1.2" fill="none" stroke="#3a6aa0" stroke-width="0.6"/><path d="M698 13.6 H702.4 M698 16 H702.4" stroke="#4a7ab8" stroke-width="0.7"/><path d="M907 13.2 L908.8 14.8 L907 16.4 M909.4 13.2 L911.2 14.8 L909.4 16.4" fill="none" stroke="#d0d0d0" stroke-width="0.8"/><circle cx="938.6" cy="14" r="1.6" fill="none" stroke="#b8b8b8" stroke-width="0.7"/><path d="M937.5 15.2 L935.8 17.2" stroke="#b8b8b8" stroke-width="0.8"/><path d="M25.8 26.8 H28.8 M25.8 27.9 H28.8 M25.8 29 H28.8" stroke="#9a9a9a" stroke-width="0.6"/><path d="M139.6 26 L141.4 27.6 L139.6 29.2 M142 26 L143.8 27.6 L142 29.2" fill="none" stroke="#d0d0d0" stroke-width="0.8"/><circle cx="7.2" cy="88.3" r="1.6" fill="none" stroke="#aaa" stroke-width="0.7"/><path d="M6.2 89.6 L4.6 91.3" stroke="#aaa" stroke-width="0.8"/><path d="M9.6 90.6 L11.4 90.6 L10.5 91.6Z" fill="#aaa"/><path d="M80.8 102.4 Q83 99.6 85.2 102.4" fill="#3a78c0" stroke="#3a78c0" stroke-width="0.6"/><path d="M90.2 99.2 L93 99.2 L95.2 101.6 L93.2 103.6 L90.2 100.8 Z" fill="#c8c8c8"/><circle cx="141.2" cy="108.2" r="1.2" fill="#c8c8c8"/><circle cx="139.2" cy="111.8" r="1.2" fill="#c8c8c8"/><circle cx="143.2" cy="111.8" r="1.2" fill="#c8c8c8"/><path d="M141.2 108.2 L139.2 111.8 M141.2 108.2 L143.2 111.8" stroke="#c8c8c8" stroke-width="0.6"/><path d="M2.5 359.4 H5.5 L6.2 360.2 H8.2 V363.6 H2.5 Z" fill="#a8a8a8"/><path d="M2.5 362 L4 360.4 H8.8 L7.4 363.6" fill="#6a6a6a"/><path d="M13.8 359.3 H16.2 L16.9 360.1 H20 V363.6 H13.8 Z" fill="#b8b8b8"/><rect x="24.6" y="359.2" width="6.4" height="4.6" fill="#b0b0b0"/><rect x="26.2" y="360.2" width="3.2" height="2.6" fill="#505050"/><path d="M36.2 362 L41.4 358.6 L39.2 363.8 L38.6 362.2 Z" fill="#b8b8b8"/><path d="M69.8 359.4 H74.6 M70.4 360.2 H74 L73.6 363.8 H70.8 Z" fill="#8a8a8a" stroke="#8a8a8a" stroke-width="0.6"/><rect x="168.6" y="26.6" width="3.4" height="2.8" fill="#b0b0b0"/><path d="M169.2 26.6 V25.4 H171.4 V26.6" fill="none" stroke="#b0b0b0" stroke-width="0.5"/><path d="M248 26.8 H251 M248 27.9 H251 M248 29 H251" stroke="#9a9a9a" stroke-width="0.6"/><path d="M175.6 359.2 L177.2 360.8 L178.8 359.2" fill="none" stroke="#8a8a8a" stroke-width="0.6"/><path d="M221.6 359.2 L223.2 360.8 L224.8 359.2" fill="none" stroke="#8a8a8a" stroke-width="0.6"/><rect x="234" y="357.8" width="5.6" height="5" fill="none" stroke="#a8a8a8" stroke-width="0.6"/><path d="M235.4 359 L237.4 361.4" stroke="#a8a8a8" stroke-width="0.6"/><rect x="243.4" y="357.8" width="5.6" height="5" fill="none" stroke="#a8a8a8" stroke-width="0.6"/><path d="M245.2 357.8 V362.8 M247.2 357.8 V362.8" stroke="#a8a8a8" stroke-width="0.4"/><path d="M254.4 362.8 V359.6 L256.2 357.8 H259 V362.8" fill="none" stroke="#a8a8a8" stroke-width="0.6"/><rect x="264" y="357.8" width="6" height="5" fill="none" stroke="#a8a8a8" stroke-width="0.6"/><rect x="265.4" y="359.2" width="3.2" height="2.2" fill="#a8a8a8"/><rect x="274" y="357.8" width="5.6" height="5" fill="none" stroke="#a8a8a8" stroke-width="0.6"/><path d="M276 360 H278 V362 M276.6 363.6 H280.4 V359.6" fill="none" stroke="#a8a8a8" stroke-width="0.4"/><circle cx="290.2" cy="359.6" r="1.6" fill="#d83a3a"/><circle cx="292.2" cy="361.6" r="1.6" fill="#3aa84a"/><circle cx="290" cy="361.8" r="1.4" fill="#3a6ad8" opacity="0.9"/><circle cx="301.8" cy="360.4" r="2.2" fill="none" stroke="#b8b8b8" stroke-width="1"/><circle cx="301.8" cy="360.4" r="0.8" fill="#b8b8b8"/><path d="M329.6 359 H331 L331.8 358 H333.6 L334.4 359 H335.4 V363 H329.6 Z" fill="#b8b8b8"/><circle cx="332.6" cy="361" r="1" fill="#404040"/><path d="M340.2 362.6 L343.6 358.4" stroke="#4a4a4a" stroke-width="0.8"/><path d="M909.6 27 H912.6 M909.6 28.1 H912.6 M909.6 29.2 H912.6" stroke="#9a9a9a" stroke-width="0.6"/><path d="M902.6 38 V42 M907.4 38 L903.6 40 L907.4 42 Z" fill="#c0c0c0" stroke="#c0c0c0" stroke-width="0.7"/><path d="M917.8 38 V42 M917 38 L913.4 40 L917 42 Z" fill="#c0c0c0" stroke="#c0c0c0" stroke-width="0.7"/><rect x="925.2" y="38.2" width="3.6" height="3.6" fill="#c0c0c0"/><path d="M935.6 38 V42 M936.6 38 L940.2 40 L936.6 42 Z" fill="#c0c0c0" stroke="#c0c0c0" stroke-width="0.7"/><path d="M951.2 38 V42 M946.4 38 L950.2 40 L946.4 42 Z" fill="#c0c0c0" stroke="#c0c0c0" stroke-width="0.7"/><path d="M1008.6 53.6 H1012.4 M1008.6 54.9 H1012.4 M1008.6 56.2 H1012.4" stroke="#8a8a8a" stroke-width="0.6"/><path d="M1008.6 119.4 H1012.4 M1008.6 120.7 H1012.4 M1008.6 122 H1012.4" stroke="#8a8a8a" stroke-width="0.6"/><circle cx="892.9" cy="136.2" r="0.5" fill="#b8b8b8"/><circle cx="892.9" cy="150.8" r="1.3" fill="#b0b0b0"/><circle cx="892.9" cy="165.6" r="1.3" fill="#b0b0b0"/><path d="M906.3499999999999 136.4 H908.75" stroke="#888" stroke-width="0.6"/><circle cx="907.55" cy="150.8" r="1.3" fill="#b0b0b0"/><circle cx="907.55" cy="165.6" r="1.3" fill="#b0b0b0"/><circle cx="922.1999999999999" cy="136.2" r="1.3" fill="#b8b8b8"/><circle cx="922.1999999999999" cy="150.8" r="1.3" fill="#b0b0b0"/><path d="M921.1999999999999 165.8 L923.1999999999999 165.2" stroke="#888" stroke-width="0.7"/><circle cx="936.85" cy="136.2" r="2.1" fill="#b8b8b8"/><circle cx="936.85" cy="150.8" r="1.3" fill="#b0b0b0"/><path d="M935.85 165.8 L937.85 165.2" stroke="#888" stroke-width="0.7"/><circle cx="951.5" cy="136.2" r="3.0" fill="#b8b8b8"/><circle cx="951.5" cy="150.8" r="1.3" fill="#b0b0b0"/><path d="M950.5 165.8 L952.5 165.2" stroke="#888" stroke-width="0.7"/><circle cx="966.15" cy="136.2" r="3.0" fill="#b8b8b8"/><circle cx="966.15" cy="150.8" r="1.3" fill="#b0b0b0"/><path d="M965.15 165.8 L967.15 165.2" stroke="#888" stroke-width="0.7"/><circle cx="980.8" cy="136.2" r="0.6" fill="#b8b8b8"/><circle cx="980.8" cy="150.8" r="1.3" fill="#b0b0b0"/><path d="M979.8 165.8 L981.8 165.2" stroke="#888" stroke-width="0.7"/><circle cx="995.4499999999999" cy="136.2" r="1.0" fill="#b8b8b8"/><circle cx="995.4499999999999" cy="150.8" r="1.3" fill="#b0b0b0"/><path d="M994.4499999999999 165.8 L996.4499999999999 165.2" stroke="#888" stroke-width="0.7"/><rect x="893.2" y="217" width="4" height="4" fill="none" stroke="#585858" stroke-width="0.6"/><path d="M893.8 219 L895 220.4 L896.8 217.6" fill="none" stroke="#585858" stroke-width="0.6"/><circle cx="957" cy="197.2" r="1.2" fill="#c0c0c0"/><path d="M960 240.7 H968" stroke="#3a3a3a" stroke-width="0.6"/><path d="M960 259.5 H968" stroke="#3a3a3a" stroke-width="0.6"/><path d="M960 269.6 H968" stroke="#3a3a3a" stroke-width="0.6"/><path d="M960 279.4 H968" stroke="#3a3a3a" stroke-width="0.6"/><path d="M960 289.8 H968" stroke="#3a3a3a" stroke-width="0.6"/><path d="M1008.6 305.2 H1012.4 M1008.6 306.5 H1012.4 M1008.6 307.8 H1012.4" stroke="#8a8a8a" stroke-width="0.6"/><path d="M934 320 L936 322 L934 324 Z" fill="#555"/><path d="M967 317.6 L969.6 317.6 L969.6 320" fill="none" stroke="#777" stroke-width="0.5"/><rect x="953" y="330.4" width="2.6" height="2.6" fill="#111" stroke="#777" stroke-width="0.4"/><path d="M924.5 394 L926 390 L927.5 394" fill="none" stroke="#4a4a4a" stroke-width="0.6"/><path d="M936.1 394 L937.6 390 L939.1 394" fill="none" stroke="#4a4a4a" stroke-width="0.6"/><path d="M947.1 394 L948.6 390 L950.1 394" fill="none" stroke="#4a4a4a" stroke-width="0.6"/><path d="M958.5 394 L960 390 L961.5 394" fill="none" stroke="#4a4a4a" stroke-width="0.6"/><rect x="888.4" y="413.8" width="4.4" height="4.4" fill="none" stroke="#555" stroke-width="0.6"/><rect x="920.6" y="413.8" width="4.4" height="4.4" fill="none" stroke="#555" stroke-width="0.6"/><rect x="888.4" y="445.8" width="4.4" height="4.4" fill="none" stroke="#555" stroke-width="0.6"/><circle cx="970.6" cy="447.8" r="1.8" fill="none" stroke="#555" stroke-width="0.6"/><path d="M63.6 373 H66.8 M63.6 374.2 H66.8 M63.6 375.4 H66.8" stroke="#c0c0c0" stroke-width="0.6"/><circle cx="52.6" cy="386.4" r="1.6" fill="none" stroke="#aaa" stroke-width="0.7"/><path d="M51.6 387.6 L50 389.3" stroke="#aaa" stroke-width="0.8"/><path d="M54.6 388.6 L56.4 388.6 L55.5 389.6Z" fill="#aaa"/><g transform="translate(0,1.3)"><path d="M188.6 385.4 H192 M189.8 387.4 H195 M191 389.4 H195.6" stroke="#b8b8b8" stroke-width="0.7"/><path d="M193.4 384 L195.6 386 L193.4 388" fill="none" stroke="#b8b8b8" stroke-width="0.5"/><circle cx="207.8" cy="386.8" r="3.2" fill="#1d4f94"/><path d="M205.8 386.8 H209.8 M207.8 385 V388.6" stroke="#9ac0f0" stroke-width="0.6"/><rect x="216.6" y="385" width="5" height="4.6" fill="#b8b8b8"/><path d="M217.6 384 H222.6 V388.6" fill="none" stroke="#b8b8b8" stroke-width="0.6"/><path d="M228.4 389.2 L232.4 384.2" stroke="#b8b8b8" stroke-width="2.2" stroke-linecap="round"/><path d="M228.4 389.2 L232.4 384.2" stroke="#232323" stroke-width="0.8" stroke-linecap="round"/><rect x="243.8" y="383.8" width="6.8" height="5.4" fill="none" stroke="#b8b8b8" stroke-width="0.7"/><path d="M245 385 L249.4 388.4" stroke="#b8b8b8" stroke-width="0.6"/></g><ellipse cx="5" cy="401.2" rx="2" ry="1.3" fill="none" stroke="#b0b0b0" stroke-width="0.6"/><circle cx="5" cy="401.2" r="0.6" fill="#b0b0b0"/><circle cx="11.6" cy="401.2" r="2" fill="#9a9a9a"/><path d="M11.6 399.2 A2 2 0 0 0 11.6 403.2 Z" fill="#d0d0d0"/><circle cx="18.6" cy="401.4" r="1.5" fill="#b8b8b8"/><rect x="23.8" y="401" width="3.6" height="2.6" fill="#b8b8b8"/><path d="M24.6 401 V400 A1 1 0 0 1 26.6 400 V401" fill="none" stroke="#b8b8b8" stroke-width="0.6"/><path d="M37.8 399 H40.4 L42.6 401.4 L40.6 403.4 L37.8 400.8 Z" fill="#c8c8c8"/><path d="M137.4 401.2 A1.8 1.8 0 0 1 141 401.2 Z M137 402 H141.4" fill="#a0a0a0" stroke="#a0a0a0" stroke-width="0.4"/><circle cx="146" cy="400.6" r="1.2" fill="#909090"/><path d="M146 401.8 V403" stroke="#909090" stroke-width="0.5"/><path d="M151.4 399.2 L154.6 403" stroke="#b0b0b0" stroke-width="0.6"/><rect x="163.8" y="399.4" width="4" height="3.6" fill="#b0b0b0"/><path d="M164.4 401.2 H167.2" stroke="#404040" stroke-width="0.5"/><circle cx="172.6" cy="401.2" r="2" fill="#909090"/><path d="M171.2 402.6 L174 399.8" stroke="#303030" stroke-width="0.5"/><circle cx="180" cy="401.2" r="2" fill="#b0b0b0"/><path d="M178.6 402.6 L181.4 399.8" stroke="#303030" stroke-width="0.6"/><circle cx="187.2" cy="401.2" r="1.8" fill="none" stroke="#808080" stroke-width="0.6"/><ellipse cx="5" cy="408" rx="2" ry="1.3" fill="none" stroke="#b0b0b0" stroke-width="0.6"/><circle cx="5" cy="408" r="0.6" fill="#b0b0b0"/><path d="M33.6 407.2 L35 408.6 L36.4 407.2" fill="none" stroke="#9a9a9a" stroke-width="0.6"/><path d="M65 405.4 L65.8 407.4 L67.6 407.4 L66.2 408.6 L66.8 410.6 L65 409.4 L63.2 410.6 L63.8 408.6 L62.4 407.4 L64.2 407.4 Z" fill="#d0d0d0"/><path d="M137.4 408.2 A1.8 1.8 0 0 1 141 408.2 Z M137 409 H141.4" fill="#a0a0a0" stroke="#a0a0a0" stroke-width="0.4"/><path d="M144.6 408 L146 406.6 L147.4 408 L146 409.4 Z" fill="#505050"/><path d="M151.2 410 L155 406" stroke="#c0c0c0" stroke-width="0.7"/><circle cx="202" cy="408" r="2" fill="none" stroke="#808080" stroke-width="0.6"/><path d="M203.4 409.4 L205 410.8" stroke="#808080" stroke-width="0.6"/><path d="M242.6 407.2 L244 408.6 L245.4 407.2" fill="none" stroke="#9a9a9a" stroke-width="0.6"/><path d="M42 414.58 L43.4 415.78 L42 416.97999999999996" fill="none" stroke="#9a9a9a" stroke-width="0.5"/><circle cx="192" cy="415.78" r="2.4" fill="#c8c8c8"/><path d="M191.2 414.58 L193 415.78 L191.2 416.97999999999996 Z" fill="#232323"/><path d="M41.8 422.9599999999999 L43 424.15999999999997 L44.2 422.9599999999999" fill="none" stroke="#9a9a9a" stroke-width="0.5"/><circle cx="58" cy="431.63999999999993" r="1.9" fill="none" stroke="#a8a8a8" stroke-width="0.6"/><path d="M57.4 429.3399999999999 H58.6" stroke="#a8a8a8" stroke-width="0.5"/><path d="M206.4 432.93999999999994 A2 2 0 1 1 209.8 431.93999999999994" fill="none" stroke="#a0a0a0" stroke-width="0.6"/><path d="M208 431.3399999999999 V430.3399999999999 M209.6 433.3399999999999 L210.4 433.3399999999999" stroke="#a0a0a0" stroke-width="0.5"/><circle cx="58" cy="439.1199999999999" r="2.8" fill="#1b3a5e"/><circle cx="58" cy="439.4199999999999" r="1.9" fill="none" stroke="#4a86c8" stroke-width="0.6"/><path d="M57.4 437.1199999999999 H58.6" stroke="#4a86c8" stroke-width="0.5"/><circle cx="12" cy="439.1199999999999" r="3.4" fill="#153456"/><path d="M10.8 439.1199999999999 L12 437.9199999999999 L13.2 439.1199999999999 L12 440.3199999999999 Z" fill="#80b0e8"/><path d="M18 437.51999999999987 L20.4 439.1199999999999 L18 440.7199999999999 Z" fill="#d0d0d0"/><path d="M64.4 437.1199999999999 V441.1199999999999 H69.6 M65 440.1199999999999 Q66.4 437.1199999999999 69.4 437.51999999999987" fill="none" stroke="#a8a8a8" stroke-width="0.5"/><path d="M206.4 440.7199999999999 A2 2 0 1 1 209.8 439.7199999999999" fill="none" stroke="#a0a0a0" stroke-width="0.6"/><path d="M208 439.1199999999999 V438.1199999999999 M209.6 441.1199999999999 L210.4 441.1199999999999" stroke="#a0a0a0" stroke-width="0.5"/><circle cx="58" cy="447.1999999999999" r="1.9" fill="none" stroke="#a8a8a8" stroke-width="0.6"/><path d="M57.4 444.89999999999986 H58.6" stroke="#a8a8a8" stroke-width="0.5"/><path d="M136.4 446.89999999999986 H141 M136.6 445.89999999999986 H137.6 V447.89999999999986 H136.6 M140.8 445.89999999999986 H139.8 V447.89999999999986 H140.8" fill="none" stroke="#a8a8a8" stroke-width="0.6"/><path d="M206.4 448.4999999999999 A2 2 0 1 1 209.8 447.4999999999999" fill="none" stroke="#a0a0a0" stroke-width="0.6"/><path d="M208 446.89999999999986 V445.89999999999986 M209.6 448.89999999999986 L210.4 448.89999999999986" stroke="#a0a0a0" stroke-width="0.5"/><circle cx="58" cy="454.97999999999985" r="1.9" fill="none" stroke="#a8a8a8" stroke-width="0.6"/><path d="M57.4 452.67999999999984 H58.6" stroke="#a8a8a8" stroke-width="0.5"/><path d="M206.4 456.27999999999986 A2 2 0 1 1 209.8 455.27999999999986" fill="none" stroke="#a0a0a0" stroke-width="0.6"/><path d="M208 454.67999999999984 V453.67999999999984 M209.6 456.67999999999984 L210.4 456.67999999999984" stroke="#a0a0a0" stroke-width="0.5"/><circle cx="58" cy="462.7599999999998" r="1.9" fill="none" stroke="#a8a8a8" stroke-width="0.6"/><path d="M57.4 460.4599999999998 H58.6" stroke="#a8a8a8" stroke-width="0.5"/><path d="M206.4 464.05999999999983 A2 2 0 1 1 209.8 463.05999999999983" fill="none" stroke="#a0a0a0" stroke-width="0.6"/><path d="M208 462.4599999999998 V461.4599999999998 M209.6 464.4599999999998 L210.4 464.4599999999998" stroke="#a0a0a0" stroke-width="0.5"/><ellipse cx="5" cy="470.2" rx="2" ry="1.3" fill="none" stroke="#b0b0b0" stroke-width="0.6"/><circle cx="5" cy="470.2" r="0.6" fill="#b0b0b0"/><path d="M33.6 469.4 L35 470.8 L36.4 469.4" fill="none" stroke="#9a9a9a" stroke-width="0.6"/><path d="M65 467.59999999999997 L65.8 469.59999999999997 L67.6 469.59999999999997 L66.2 470.8 L66.8 472.8 L65 471.59999999999997 L63.2 472.8 L63.8 470.8 L62.4 469.59999999999997 L64.2 469.59999999999997 Z" fill="#d0d0d0"/><path d="M137.4 470.4 A1.8 1.8 0 0 1 141 470.4 Z M137 471.2 H141.4" fill="#a0a0a0" stroke="#a0a0a0" stroke-width="0.4"/><path d="M144.6 470.2 L146 468.8 L147.4 470.2 L146 471.59999999999997 Z" fill="#505050"/><path d="M151.2 472.2 L155 468.2" stroke="#c0c0c0" stroke-width="0.7"/><circle cx="202" cy="470.2" r="2" fill="none" stroke="#808080" stroke-width="0.6"/><path d="M203.4 471.59999999999997 L205 473.0" stroke="#808080" stroke-width="0.6"/><path d="M242.6 469.4 L244 470.8 L245.4 469.4" fill="none" stroke="#9a9a9a" stroke-width="0.6"/><path d="M42 476.78 L43.4 477.97999999999996 L42 479.17999999999995" fill="none" stroke="#9a9a9a" stroke-width="0.5"/><circle cx="192" cy="477.97999999999996" r="2.4" fill="#c8c8c8"/><path d="M191.2 476.78 L193 477.97999999999996 L191.2 479.17999999999995 Z" fill="#232323"/><path d="M41.8 485.1599999999999 L43 486.35999999999996 L44.2 485.1599999999999" fill="none" stroke="#9a9a9a" stroke-width="0.5"/><circle cx="58" cy="493.8399999999999" r="1.9" fill="none" stroke="#a8a8a8" stroke-width="0.6"/><path d="M57.4 491.5399999999999 H58.6" stroke="#a8a8a8" stroke-width="0.5"/><path d="M206.4 495.13999999999993 A2 2 0 1 1 209.8 494.13999999999993" fill="none" stroke="#a0a0a0" stroke-width="0.6"/><path d="M208 493.5399999999999 V492.5399999999999 M209.6 495.5399999999999 L210.4 495.5399999999999" stroke="#a0a0a0" stroke-width="0.5"/><circle cx="58" cy="501.6199999999999" r="1.9" fill="none" stroke="#a8a8a8" stroke-width="0.6"/><path d="M57.4 499.3199999999999 H58.6" stroke="#a8a8a8" stroke-width="0.5"/><path d="M206.4 502.9199999999999 A2 2 0 1 1 209.8 501.9199999999999" fill="none" stroke="#a0a0a0" stroke-width="0.6"/><path d="M208 501.3199999999999 V500.3199999999999 M209.6 503.3199999999999 L210.4 503.3199999999999" stroke="#a0a0a0" stroke-width="0.5"/><circle cx="58" cy="509.09999999999985" r="2.8" fill="#1b3a5e"/><circle cx="58" cy="509.39999999999986" r="1.9" fill="none" stroke="#4a86c8" stroke-width="0.6"/><path d="M57.4 507.09999999999985 H58.6" stroke="#4a86c8" stroke-width="0.5"/><circle cx="12" cy="509.09999999999985" r="3.4" fill="#153456"/><path d="M10.8 509.09999999999985 L12 507.89999999999986 L13.2 509.09999999999985 L12 510.29999999999984 Z" fill="#80b0e8"/><path d="M18 507.49999999999983 L20.4 509.09999999999985 L18 510.6999999999999 Z" fill="#d0d0d0"/><path d="M64.4 507.09999999999985 V511.09999999999985 H69.6 M65 510.09999999999985 Q66.4 507.09999999999985 69.4 507.49999999999983" fill="none" stroke="#a8a8a8" stroke-width="0.5"/><path d="M136.4 509.09999999999985 H141 M136.6 508.09999999999985 H137.6 V510.09999999999985 H136.6 M140.8 508.09999999999985 H139.8 V510.09999999999985 H140.8" fill="none" stroke="#a8a8a8" stroke-width="0.6"/><path d="M206.4 510.6999999999999 A2 2 0 1 1 209.8 509.6999999999999" fill="none" stroke="#a0a0a0" stroke-width="0.6"/><path d="M208 509.09999999999985 V508.09999999999985 M209.6 511.09999999999985 L210.4 511.09999999999985" stroke="#a0a0a0" stroke-width="0.5"/><circle cx="58" cy="517.1799999999998" r="1.9" fill="none" stroke="#a8a8a8" stroke-width="0.6"/><path d="M57.4 514.8799999999999 H58.6" stroke="#a8a8a8" stroke-width="0.5"/><path d="M206.4 518.4799999999999 A2 2 0 1 1 209.8 517.4799999999999" fill="none" stroke="#a0a0a0" stroke-width="0.6"/><path d="M208 516.8799999999999 V515.8799999999999 M209.6 518.8799999999999 L210.4 518.8799999999999" stroke="#a0a0a0" stroke-width="0.5"/><path d="M231 450 L231 456.6 L232.6 455.2 L233.8 457.6 L234.6 457.2 L233.4 454.8 L235.4 454.6 Z" fill="#e0e0e0" stroke="#202020" stroke-width="0.4"/><rect x="2.6" y="519.8" width="4" height="3.6" fill="#3a6ab0"/><rect x="4" y="521" width="3.6" height="3.4" fill="none" stroke="#8ab0e0" stroke-width="0.5"/><circle cx="13" cy="521.6" r="1.6" fill="none" stroke="#a0a0a0" stroke-width="0.6"/><rect x="14" y="522" width="2.4" height="2.4" fill="none" stroke="#a0a0a0" stroke-width="0.6"/><rect x="21.6" y="519.8" width="3" height="4.6" fill="none" stroke="#a0a0a0" stroke-width="0.6"/><path d="M29 524.4 V520.4 H33.4 V524.4" fill="#a0a0a0"/><path d="M261 522.8 L262.4 521.4 L263.8 522.8" fill="none" stroke="#888" stroke-width="0.6"/><circle cx="272" cy="521.8" r="1.6" fill="none" stroke="#a0a0a0" stroke-width="0.6"/><path d="M274 522 H292" stroke="#3a3a3a" stroke-width="0.8"/><path d="M297.6 523.6 L299.6 520.6 L301 522.4 L302.4 520.4 L304.2 523.6 Z" fill="#a8a8a8"/><ellipse cx="261" cy="384.6" rx="2.2" ry="1.8" fill="#4a8ee0"/><ellipse cx="869.4" cy="384.8" rx="2.4" ry="2" fill="#3f7ed0"/><path d="M350.6 439.4 L352.6 437.4 L354.6 439.4 L352.6 441.4 Z" fill="#d8d8d8"/><path d="M456.6 439.4 L458.6 437.4 L460.6 439.4 L458.6 441.4 Z" fill="#d8d8d8"/><path d="M552.2 439.4 L554.2 437.4 L556.2 439.4 L554.2 441.4 Z" fill="#d8d8d8"/><path d="M653.3 439.4 L655.3 437.4 L657.3 439.4 L655.3 441.4 Z" fill="#d8d8d8"/><path d="M754.8 439.4 L756.8 437.4 L758.8 439.4 L756.8 441.4 Z" fill="#d8d8d8"/><path d="M860.4 439.4 L862.4 437.4 L864.4 439.4 L862.4 441.4 Z" fill="#d8d8d8"/><path d="M350.6 509.8 L352.6 507.8 L354.6 509.8 L352.6 511.8 Z" fill="#d8d8d8"/><path d="M456.6 509.8 L458.6 507.8 L460.6 509.8 L458.6 511.8 Z" fill="#d8d8d8"/><path d="M552.2 509.8 L554.2 507.8 L556.2 509.8 L554.2 511.8 Z" fill="#d8d8d8"/><path d="M653.3 509.8 L655.3 507.8 L657.3 509.8 L655.3 511.8 Z" fill="#d8d8d8"/><path d="M754.8 509.8 L756.8 507.8 L758.8 509.8 L756.8 511.8 Z" fill="#d8d8d8"/><path d="M860.4 509.8 L862.4 507.8 L864.4 509.8 L862.4 511.8 Z" fill="#d8d8d8"/><path d="M259 389 H266 L262.6 395.4 Z" fill="#3a8ef0"/><rect x="260.2" y="396" width="3" height="6.6" fill="#4a7ed0" rx="1"/><path d="M260.4 413.70 H263.2 M261.8 413.70 V418.30 M260.4 418.30 H263.2" stroke="#c0c6d0" stroke-width="0.9" fill="none"/><path d="M260.4 421.48 H263.2 M261.8 421.48 V426.08 M260.4 426.08 H263.2" stroke="#c0c6d0" stroke-width="0.9" fill="none"/><path d="M260.4 429.26 H263.2 M261.8 429.26 V433.86 M260.4 433.86 H263.2" stroke="#c0c6d0" stroke-width="0.9" fill="none"/><path d="M259.8 439.34 L261.8 437.34 L263.8 439.34 L261.8 441.34 Z" fill="#c8ccd4"/><path d="M260.4 444.82 H263.2 M261.8 444.82 V449.42 M260.4 449.42 H263.2" stroke="#c0c6d0" stroke-width="0.9" fill="none"/><path d="M260.4 452.60 H263.2 M261.8 452.60 V457.20 M260.4 457.20 H263.2" stroke="#c0c6d0" stroke-width="0.9" fill="none"/><path d="M260.4 460.38 H263.2 M261.8 460.38 V464.98 M260.4 464.98 H263.2" stroke="#c0c6d0" stroke-width="0.9" fill="none"/><path d="M260.4 475.94 H263.2 M261.8 475.94 V480.54 M260.4 480.54 H263.2" stroke="#c0c6d0" stroke-width="0.9" fill="none"/><path d="M260.4 483.72 H263.2 M261.8 483.72 V488.32 M260.4 488.32 H263.2" stroke="#c0c6d0" stroke-width="0.9" fill="none"/><path d="M260.4 491.50 H263.2 M261.8 491.50 V496.10 M260.4 496.10 H263.2" stroke="#c0c6d0" stroke-width="0.9" fill="none"/><path d="M260.4 499.28 H263.2 M261.8 499.28 V503.88 M260.4 503.88 H263.2" stroke="#c0c6d0" stroke-width="0.9" fill="none"/><path d="M259.8 509.36 L261.8 507.36 L263.8 509.36 L261.8 511.36 Z" fill="#c8ccd4"/><path d="M260.4 514.84 H263.2 M261.8 514.84 V519.44 M260.4 519.44 H263.2" stroke="#c0c6d0" stroke-width="0.9" fill="none"/><path d="M872.5 397 H878.2 V399 L875.35 402.6 L872.5 399 Z" fill="#e4e4e4"/><path d="M872.4 404.4 L875.4 408 L878 404.8" fill="none" stroke="#d8d8d8" stroke-width="0.9"/><path d="M871.6 410.2 L874.6 406.8 L878 410.6 L874.8 412.6 Z" fill="#d0d0d0"/></svg>
</body></html>
